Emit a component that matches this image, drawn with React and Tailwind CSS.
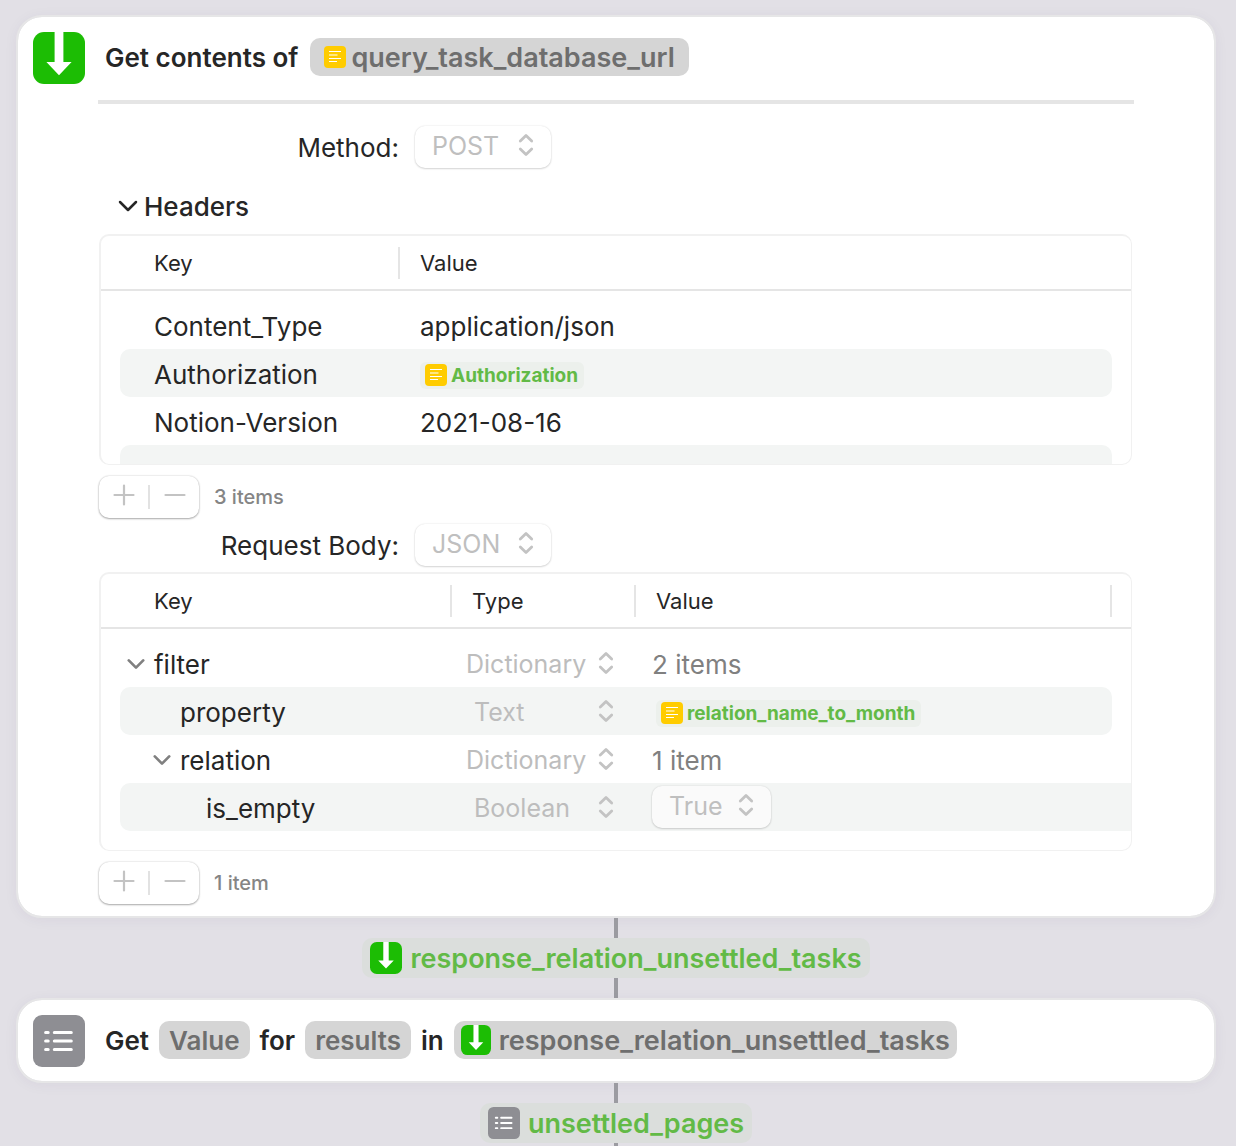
import React from "react";

function DownloadIcon({ className }) {
  return (
    <svg viewBox="0 0 52 52" className={className} aria-hidden="true">
      <rect width="52" height="52" rx="11" fill="#1cbd04" />
      <path d="M21.6 0h8.8v30h8.2L26 43.2 13.4 30h8.2z" fill="#fff" />
    </svg>
  );
}

function ListIcon({ className }) {
  return (
    <svg viewBox="0 0 52 52" className={className} aria-hidden="true">
      <rect width="52" height="52" rx="9" fill="#8e8e93" />
      <g stroke="#fff" strokeWidth="3" strokeLinecap="round">
        <path d="M12.6 17.4h2.6M12.6 26h2.6M12.6 34.4h2.6M21.3 17.4h17M21.3 26h17M21.3 34.4h17" />
      </g>
    </svg>
  );
}

function TextIcon() {
  return (
    <svg viewBox="0 0 22 22" className="size-[22px] shrink-0" aria-hidden="true">
      <rect width="22" height="22" rx="4" fill="#ffcc00" />
      <path d="M5 5.5h12M5 9h8.5M5 12.5h12M5 15.5h8" stroke="#fff" strokeWidth="1.2" fill="none" />
    </svg>
  );
}

function UpDownIcon({ className }) {
  return (
    <svg viewBox="0 0 16 24" className={className} fill="none" stroke="#c3c3c3" strokeWidth="2.8" strokeLinecap="round" strokeLinejoin="round" aria-hidden="true">
      <path d="M2.3 8 8 2.5 13.7 8M2.3 16 8 21.5 13.7 16" />
    </svg>
  );
}

function ChevronDown({ className }) {
  return (
    <svg viewBox="0 0 20 12" className={className} fill="none" stroke="currentColor" strokeLinecap="round" strokeLinejoin="round" aria-hidden="true">
      <path d="M2 2l8 8 8-8" />
    </svg>
  );
}

function Popup({ label, id, value, width, white }) {
  return (
    <div className={`relative ${width}`}>
      <select
        id={id}
        aria-label={label}
        disabled
        className={`block h-[42px] w-full appearance-none rounded-[10px] pb-0.5 pl-[17px] text-[25px] leading-8 text-[#bfbfbf] opacity-100 shadow-[0_1px_2px_rgba(0,0,0,0.14),0_0_2px_rgba(0,0,0,0.12)] ${white ? "bg-white" : "bg-[#fafafa]"}`}
      >
        <option>{value}</option>
      </select>
      <UpDownIcon className="pointer-events-none absolute top-[7px] right-[17px] h-6 w-4" />
    </div>
  );
}

function TypeSelect({ value, label, indent }) {
  return (
    <div className="relative w-[172px]">
      <select
        aria-label={label}
        disabled
        className={`block h-12 w-full appearance-none bg-transparent pt-1 text-[25px] text-[#bdbdbd] opacity-100 ${indent ? "pl-6" : "pl-4"}`}
      >
        <option>{value}</option>
      </select>
      <UpDownIcon className="pointer-events-none absolute top-3 right-2 h-6 w-4" />
    </div>
  );
}

function Token({ children }) {
  return (
    <span className="inline-flex h-[27px] items-center gap-1 rounded-md bg-[#ecf0ec] pr-1.5 pl-[5px] text-[19px] font-bold text-[#62ba46]">
      <TextIcon />
      <span className="pt-0.5">{children}</span>
    </span>
  );
}

function Chip({ children, className = "px-2.5" }) {
  return (
    <span className={`inline-flex h-[38px] items-center rounded-[10px] bg-[#d5d5d5] text-[#6e6e6e] ${className}`}>
      {children}
    </span>
  );
}

function Th({ children, divider, end }) {
  return (
    <th scope="col" className="border-b-2 border-[#e5e5e5] p-0 text-left font-normal">
      <div className="flex h-[53px] items-center">
        <div className={`flex h-8 flex-1 items-center pt-0.5 text-[22px] ${divider ? "border-l-2 border-[#e5e5e5] pl-5" : "pl-[53px]"} ${end ? "mr-[19px] border-r-2" : ""}`}>
          {children}
        </div>
      </div>
    </th>
  );
}

function Row({ cells, striped, bleed }) {
  const fill = striped ? "bg-[#f3f5f4]" : "";
  return (
    <tr>
      {cells.map((cell, i) => {
        const first = i === 0;
        const last = i === cells.length - 1;
        return (
          <td key={i} className={`p-0 ${first ? "pl-[19px]" : ""} ${last && !bleed ? "pr-[19px]" : ""}`}>
            <div className={`flex h-12 items-center ${fill} ${first ? "rounded-l-[10px]" : ""} ${last && !bleed ? "rounded-r-[10px]" : ""}`}>
              {cell}
            </div>
          </td>
        );
      })}
    </tr>
  );
}

function TableFrame({ label, widths, head, children, className = "" }) {
  return (
    <div className={`mr-0.5 ml-px overflow-hidden rounded-[10px] border-t-2 border-r border-b border-l-2 border-[#f1f1f1] ${className}`}>
      <table aria-label={label} className="w-full table-fixed border-separate border-spacing-0 text-[26px]">
        <colgroup>
          {widths.map((w, i) => (
            <col key={i} className={w} />
          ))}
        </colgroup>
        <thead>
          <tr>{head}</tr>
        </thead>
        <tbody>
          <tr aria-hidden="true">
            <td className="h-2.5 p-0" colSpan={widths.length}></td>
          </tr>
          {children}
        </tbody>
      </table>
    </div>
  );
}

function Toolbar({ count, name }) {
  return (
    <div className="mt-[11px] ml-px flex items-center gap-[15px]">
      <div className="flex h-[42px] w-[100px] items-center rounded-[10px] bg-white shadow-[0_1px_2px_rgba(0,0,0,0.3),0_0_2px_rgba(0,0,0,0.2)]">
        <button type="button" aria-label={`Add ${name}`} className="flex h-full flex-1 items-center justify-center pb-1">
          <svg viewBox="0 0 22 22" className="size-[22px]" stroke="#c3c3c3" strokeWidth="2.2" strokeLinecap="round">
            <path d="M11 1.5v19M1.5 11h19" />
          </svg>
        </button>
        <span className="h-6 w-0.5 bg-[#e2e2e2]"></span>
        <button type="button" aria-label={`Remove ${name}`} className="flex h-full flex-1 items-center justify-center pb-1">
          <svg viewBox="0 0 22 22" className="size-[22px]" stroke="#c3c3c3" strokeWidth="2.2" strokeLinecap="round">
            <path d="M1.5 11h19" />
          </svg>
        </button>
      </div>
      <span className="text-xl font-medium text-[#858585]">{count}</span>
    </div>
  );
}

function TextCell({ children, pad }) {
  return <span className={`pt-0.5 ${pad}`}>{children}</span>;
}

function CountCell({ children }) {
  return <span className="pt-0.5 pl-[18px] text-[#808080]">{children}</span>;
}

function TokenCell({ children }) {
  return (
    <span className="flex pt-1 pl-[22px]">
      <Token>{children}</Token>
    </span>
  );
}

function KeyCell({ name, pad, open }) {
  return (
    <div className={`flex items-center gap-[9px] pt-0.5 ${pad}`}>
      {open && (
        <button type="button" aria-label={`Collapse ${name}`} className="text-[#808080]">
          <ChevronDown className="h-3 w-[18px] stroke-3" />
        </button>
      )}
      <span>{name}</span>
    </div>
  );
}

function Card({ children }) {
  return (
    <section className="w-full rounded-[26px] border-2 border-[#e6e6e7] bg-white bg-clip-padding shadow-[0_2px_14px_rgba(60,40,90,0.05)]">
      {children}
    </section>
  );
}

function Connector({ className = "h-5" }) {
  return <div className={`w-1 bg-[#9b9ba1] ${className}`}></div>;
}

function Result({ icon, children }) {
  return (
    <div className="flex h-10 items-center gap-2 rounded-[10px] bg-[#dbdedc] px-2 text-[27px] font-semibold text-[#62ba46]">
      {icon}
      <span className="pt-0.5">{children}</span>
    </div>
  );
}

export default function App() {
  return (
    <main className="flex min-h-screen flex-col items-center bg-[#e2e0e6] pt-[15px] pr-5 pl-4 font-[Inter,sans-serif] text-[#262626]">
      <Card>
        <header className="flex items-center gap-5 px-[15px] pt-[15px] pb-4">
          <DownloadIcon className="size-[52px] shrink-0" />
          <h2 className="flex items-center gap-3 pb-0.5 text-[26px] font-semibold">
            Get contents of
            <Chip className="gap-[5px] pr-3.5 pl-3.5 text-[27px]">
              <TextIcon />
              <span className="pt-0.5">query_task_database_url</span>
            </Chip>
          </h2>
        </header>
        <div className="px-20 pb-3">
          <hr className="border-t-4 border-[#e5e5e5]" />

          <div className="mt-[22px] flex items-center gap-4">
            <label htmlFor="method" className="w-[301px] pt-0.5 text-right text-[26px] leading-8">Method:</label>
            <Popup id="method" value="POST" width="w-[136px]" white />
          </div>

          <button type="button" className="mt-[22px] ml-5 flex h-8 items-center gap-1.5 text-[26px] font-medium">
            <ChevronDown className="h-3 w-5 stroke-[2.5]" />
            Headers
          </button>

          <TableFrame
            label="Headers"
            className="mt-3 h-[231px]"
            widths={["w-[297px]", ""]}
            head={<><Th>Key</Th><Th divider>Value</Th></>}
          >
            <Row cells={[<TextCell pad="pl-[34px]">Content_Type</TextCell>, <TextCell pad="pl-[22px]">application/json</TextCell>]} />
            <Row striped cells={[<TextCell pad="pl-[34px]">Authorization</TextCell>, <TokenCell>Authorization</TokenCell>]} />
            <Row cells={[<TextCell pad="pl-[34px]">Notion-Version</TextCell>, <TextCell pad="pl-[22px]">2021-08-16</TextCell>]} />
            <Row striped cells={["", ""]} />
          </TableFrame>
          <Toolbar count="3 items" name="header" />

          <div className="mt-1.5 flex items-center gap-4">
            <label htmlFor="body" className="w-[301px] pt-0.5 text-right text-[26px] leading-8">Request Body:</label>
            <Popup id="body" value="JSON" width="w-[136px]" white />
          </div>

          <TableFrame
            label="Request Body"
            className="mt-1.5 pb-[19px]"
            widths={["w-[349px]", "w-[184px]", ""]}
            head={<><Th>Key</Th><Th divider>Type</Th><Th divider end>Value</Th></>}
          >
            <Row cells={[<KeyCell name="filter" pad="pl-[7px]" open />, <TypeSelect label="Type of filter" value="Dictionary" />, <CountCell>2 items</CountCell>]} />
            <Row striped cells={[<KeyCell name="property" pad="pl-[60px]" />, <TypeSelect label="Type of property" value="Text" indent />, <TokenCell>relation_name_to_month</TokenCell>]} />
            <Row cells={[<KeyCell name="relation" pad="pl-[33px]" open />, <TypeSelect label="Type of relation" value="Dictionary" />, <CountCell>1 item</CountCell>]} />
            <Row striped bleed cells={[<KeyCell name="is_empty" pad="pl-[86px]" />, <TypeSelect label="Type of is_empty" value="Boolean" indent />, <div className="pl-[18px]"><Popup label="Value of is_empty" value="True" width="w-[119px]" /></div>]} />
          </TableFrame>
          <Toolbar count="1 item" name="body field" />
        </div>
      </Card>

      <Connector />
      <Result icon={<DownloadIcon className="size-8" />}>response_relation_unsettled_tasks</Result>
      <Connector />

      <Card>
        <header className="flex items-center gap-5 px-[15px] pt-[15px] pb-3.5">
          <ListIcon className="size-[52px] shrink-0" />
          <h2 className="flex items-center gap-2.5 pb-0.5 text-[26px] font-semibold">
            Get <Chip>Value</Chip> for <Chip>results</Chip> in
            <Chip className="gap-2 px-[7px] text-[27px]">
              <DownloadIcon className="size-[30px]" />
              <span className="pt-0.5">response_relation_unsettled_tasks</span>
            </Chip>
          </h2>
        </header>
      </Card>

      <Connector />
      <Result icon={<ListIcon className="size-8" />}>unsettled_pages</Result>
      <Connector className="min-h-[3px] grow" />
    </main>
  );
}
